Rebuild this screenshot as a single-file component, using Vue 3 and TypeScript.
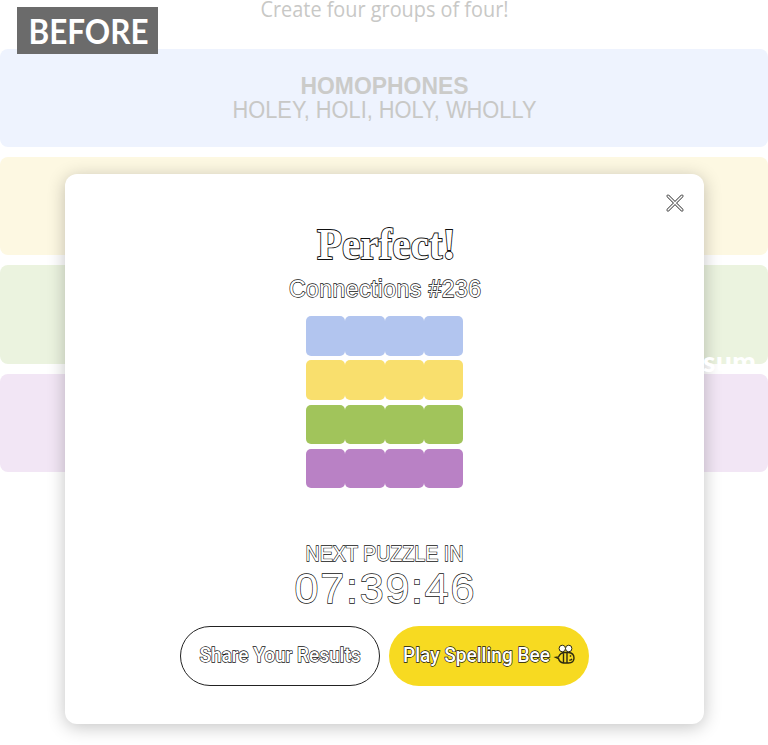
<script setup lang="ts">
interface Group {
  name: string
  band: string
  tile: string
}

const groups: Group[] = [
  { name: 'blue', band: '#eef3fe', tile: '#b2c5ef' },
  { name: 'yellow', band: '#fdf8e2', tile: '#f9df6d' },
  { name: 'green', band: '#ebf3df', tile: '#a1c45b' },
  { name: 'purple', band: '#f2e6f5', tile: '#b981c5' },
]
</script>

<template>
  <main class="page">
    <svg class="intro" width="768" height="26">
      <text x="260.500" y="17" textLength="248" lengthAdjust="spacingAndGlyphs">Create four groups of four!</text>
    </svg>
    <section class="bands">
      <div v-for="(g, i) in groups" :key="g.name" class="band" :style="{ background: g.band }">
        <svg v-if="i === 0" width="768" height="98">
          <text class="answer-title" x="300.500" y="44.700" textLength="168" lengthAdjust="spacingAndGlyphs">HOMOPHONES</text>
          <text class="answer-words" x="232.500" y="69.300" textLength="304" lengthAdjust="spacingAndGlyphs">HOLEY, HOLI, HOLY, WHOLLY</text>
        </svg>
      </div>
    </section>

    <div class="badge">
      <svg width="141" height="48">
        <text x="11.500" y="36.500" textLength="120" lengthAdjust="spacingAndGlyphs">BEFORE</text>
      </svg>
    </div>

    <section class="modal">
      <button class="close" aria-label="Close">
        <svg width="20" height="20" viewBox="0 0 20 20">
          <path class="cross-edge" d="M3 3 17 17M17 3 3 17" />
          <path class="cross-fill" d="M3 3 17 17M17 3 3 17" />
        </svg>
      </button>
      <svg class="heading outlined" width="240" height="60">
        <text class="perfect" x="52" y="44.500" textLength="139" lengthAdjust="spacingAndGlyphs">Perfect!</text>
      </svg>
      <svg class="outlined" width="240" height="42">
        <text class="puzzle" x="24" y="23" textLength="192" lengthAdjust="spacing">Connections #236</text>
      </svg>
      <div class="results">
        <div v-for="g in groups" :key="g.name" class="row">
          <span v-for="n in 4" :key="n" class="tile" :style="{ background: g.tile }"></span>
        </div>
      </div>
      <svg class="next outlined" width="240" height="26">
        <text class="label" x="40.500" y="21" textLength="158" lengthAdjust="spacingAndGlyphs">NEXT PUZZLE IN</text>
      </svg>
      <svg class="outlined" width="240" height="60">
        <text class="timer" x="29.500" y="36.500" textLength="180" lengthAdjust="spacing">07:39:46</text>
      </svg>
      <div class="actions">
        <button class="pill share">
          <svg class="outlined" width="198" height="58">
            <text x="18.500" y="35" textLength="161" lengthAdjust="spacingAndGlyphs">Share Your Results</text>
          </svg>
        </button>
        <button class="pill play">
          <svg class="outlined" width="200" height="60">
            <text x="14" y="35.500" textLength="147" lengthAdjust="spacingAndGlyphs">Play Spelling Bee</text>
            <g class="bee" transform="translate(166.500 18.500)">
              <path class="body" d="M3 12.500Q5 8 9 8H13Q18.500 8.500 18.500 13.500Q18.500 18.500 13 18.500H8Q4 18 3 14L.5 12.800ZM8 8V18.500M11.500 8V18.500" />
              <ellipse class="wing" cx="6.800" cy="4" rx="3.200" ry="3.300" />
              <ellipse class="wing" cx="13.200" cy="4" rx="3.200" ry="3.300" />
              <path class="face" d="M15 10.800V12.300M13.800 15.500Q15.500 16 16.500 14.300" />
            </g>
          </svg>
        </button>
      </div>
    </section>
    <span class="watermark">sum</span>
  </main>
</template>

<style>
body {
  margin: 0;
  background: #fff;
}
</style>

<style scoped>
.page {
  position: relative;
  width: 768px;
  height: 745px;
  overflow: hidden;
  background: #fff;
  font-family: "Liberation Sans", Arial, sans-serif;
}
svg {
  display: block;
  overflow: visible;
}
button {
  margin: 0;
  padding: 0;
  border: 0;
  background: none;
  font-family: inherit;
}
.intro text {
  font: 400 22px "Open Sans", sans-serif;
  fill: #c8c8c6;
}
.bands {
  display: flex;
  flex-direction: column;
  gap: 10px;
  padding-top: 23px;
}
.band {
  height: 98.200px;
  border-radius: 8px;
}
.answer-title {
  font-size: 24px;
  font-weight: 700;
  fill: #cbcbc9;
}
.answer-words {
  font-size: 24.500px;
  fill: #c8c8c6;
}
.badge {
  position: absolute;
  left: 17px;
  top: 7px;
  width: 141px;
  height: 47px;
  background: #6b6b6b;
}
.badge text {
  font: 700 33.500px Lato, sans-serif;
  fill: #fff;
}
.modal {
  position: absolute;
  left: 65px;
  top: 174px;
  width: 639px;
  height: 550px;
  border-radius: 12px;
  background: #fff;
  box-shadow: 0 3px 18px rgba(0, 0, 0, 0.24);
  display: flex;
  flex-direction: column;
  align-items: center;
}
.close {
  align-self: flex-end;
  margin: 19px 19px 0 0;
}
.cross-edge {
  stroke: #222;
  stroke-width: 3;
  stroke-linecap: round;
}
.cross-fill {
  stroke: #fff;
  stroke-width: 1.600;
  stroke-linecap: round;
}
.outlined text {
  fill: #fff;
  stroke: #111;
  stroke-width: 1.300px;
  paint-order: stroke;
}
.heading {
  margin-top: 1px;
}
.outlined .perfect {
  font: 700 45px "Liberation Serif", serif;
  stroke-width: 1.900px;
}
.puzzle {
  font-size: 23px;
}
.results {
  display: flex;
  flex-direction: column;
  gap: 4.900px;
  margin-top: 0.300px;
}
.row {
  display: flex;
}
.tile {
  width: 39.400px;
  height: 39.300px;
  border-radius: 5px;
}
.next {
  margin-top: 52px;
}
.label {
  font-size: 21.500px;
}
.timer {
  font-size: 43px;
}
.actions {
  display: flex;
  gap: 9px;
}
.pill {
  box-sizing: border-box;
  width: 200px;
  height: 59.500px;
  border-radius: 30px;
}
.pill text {
  font: 500 19.500px Roboto, sans-serif;
}
.share {
  border: 1px solid #222;
}
.play {
  background: #f7da21;
}
.bee path,
.bee ellipse {
  stroke: #2c2a10;
  stroke-width: 1.400;
}
.bee .body,
.bee .face {
  fill: none;
}
.bee .wing {
  fill: #fff;
  stroke-width: 1;
}
.watermark {
  position: absolute;
  left: 703px;
  top: 343.500px;
  font: 900 28px/34px Lato, sans-serif;
  letter-spacing: 0.500px;
  color: #fff;
}
</style>
